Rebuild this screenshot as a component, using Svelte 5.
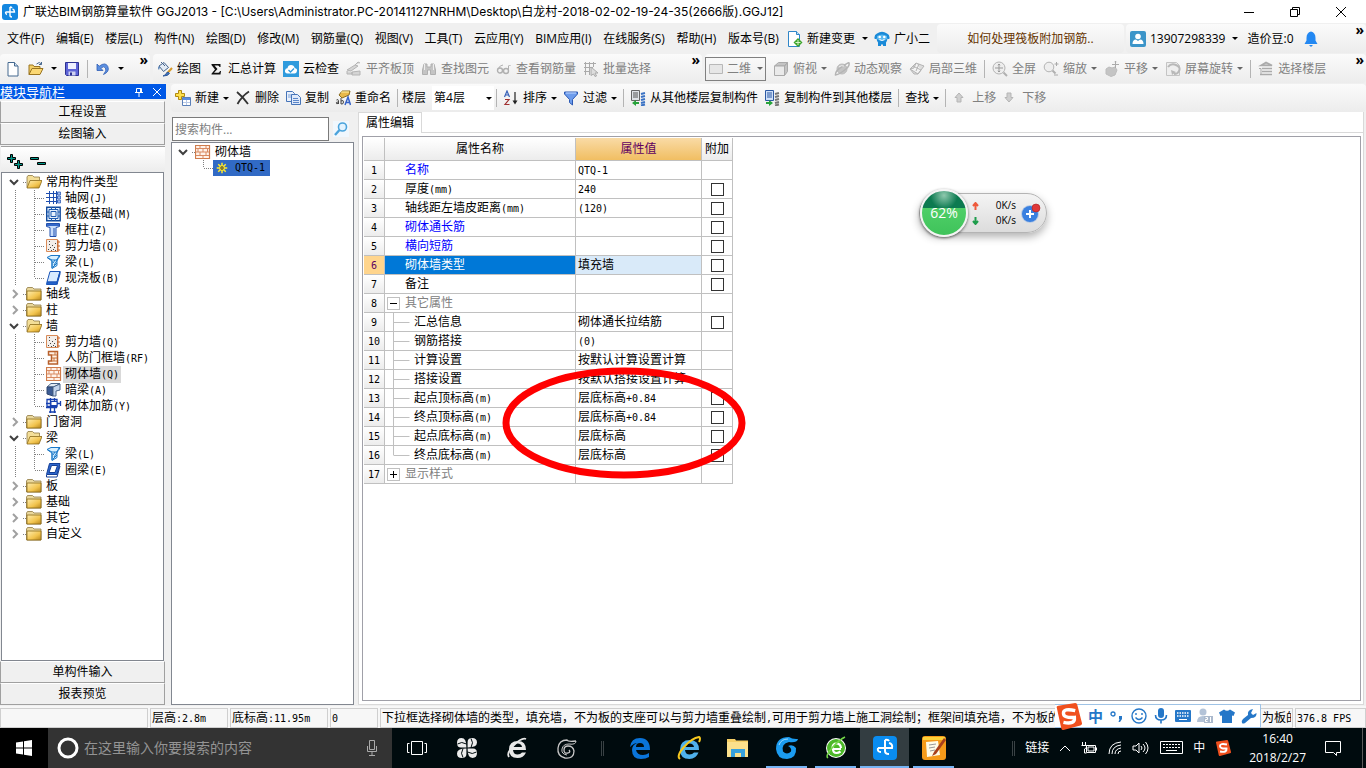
<script>
  const title = '广联达BIM钢筋算量软件 GGJ2013 - [C:\\Users\\Administrator.PC-20141127NRHM\\Desktop\\白龙村-2018-02-02-19-24-35(2666版).GGJ12]';

  const menus = [
    '文件(F)', '编辑(E)', '楼层(L)', '构件(N)', '绘图(D)', '修改(M)', '钢筋量(Q)',
    '视图(V)', '工具(T)', '云应用(Y)', 'BIM应用(I)', '在线服务(S)', '帮助(H)', '版本号(B)'
  ];

  const drawTools = [
    { icon: 'brush', text: '绘图' },
    { icon: 'sigma', text: '汇总计算' },
    { icon: 'cloud', text: '云检查' },
    { icon: 'align', text: '平齐板顶', off: true },
    { icon: 'binoculars', text: '查找图元', off: true },
    { icon: 'glasses', text: '查看钢筋量', off: true },
    { icon: 'batch', text: '批量选择', off: true }
  ];

  const viewTools = [
    { icon: 'cube', text: '俯视', caret: true, off: true },
    { icon: 'orbit', text: '动态观察', off: true },
    { icon: 'local3d', text: '局部三维', off: true },
    { sep: true },
    { icon: 'fit', text: '全屏', off: true },
    { icon: 'zoom', text: '缩放', caret: true, off: true },
    { icon: 'pan', text: '平移', caret: true, off: true },
    { icon: 'rotate', text: '屏幕旋转', caret: true, off: true },
    { sep: true },
    { icon: 'floors', text: '选择楼层', off: true }
  ];

  const editTools = [
    { icon: 'create', text: '新建', caret: true },
    { icon: 'remove', text: '删除' },
    { icon: 'copy', text: '复制' },
    { icon: 'rename', text: '重命名' }
  ];

  const listTools = [
    { icon: 'sort', text: '排序', caret: true },
    { icon: 'filter', text: '过滤', caret: true },
    { sep: true },
    { icon: 'copyFrom', text: '从其他楼层复制构件' },
    { icon: 'copyTo', text: '复制构件到其他楼层' },
    { sep: true },
    { text: '查找', caret: true },
    { sep: true },
    { icon: 'up', text: '上移', off: true },
    { icon: 'down', text: '下移', off: true }
  ];

  let groups = [
    {
      text: '常用构件类型', open: true, items: [
        { icon: 'axis', text: '轴网(J)' },
        { icon: 'raft', text: '筏板基础(M)' },
        { icon: 'column', text: '框柱(Z)' },
        { icon: 'shear', text: '剪力墙(Q)' },
        { icon: 'beam', text: '梁(L)' },
        { icon: 'slab', text: '现浇板(B)' }
      ]
    },
    { text: '轴线', open: false, items: [] },
    { text: '柱', open: false, items: [] },
    {
      text: '墙', open: true, items: [
        { icon: 'shear', text: '剪力墙(Q)' },
        { icon: 'door', text: '人防门框墙(RF)' },
        { icon: 'brick', text: '砌体墙(Q)', current: true },
        { icon: 'hidden', text: '暗梁(A)' },
        { icon: 'rebar', text: '砌体加筋(Y)' }
      ]
    },
    { text: '门窗洞', open: false, items: [] },
    {
      text: '梁', open: true, items: [
        { icon: 'beam', text: '梁(L)' },
        { icon: 'ring', text: '圈梁(E)' }
      ]
    },
    { text: '板', open: false, items: [] },
    { text: '基础', open: false, items: [] },
    { text: '其它', open: false, items: [] },
    { text: '自定义', open: false, items: [] }
  ];

  const rows = [
    { name: '名称', value: 'QTQ-1', blue: true },
    { name: '厚度(mm)', value: '240', check: true },
    { name: '轴线距左墙皮距离(mm)', value: '(120)', check: true },
    { name: '砌体通长筋', value: '', blue: true, check: true },
    { name: '横向短筋', value: '', blue: true, check: true },
    { name: '砌体墙类型', value: '填充墙', check: true, selected: true },
    { name: '备注', value: '', check: true },
    { name: '其它属性', value: '', toggle: '-' },
    { name: '汇总信息', value: '砌体通长拉结筋', child: true, check: true },
    { name: '钢筋搭接', value: '(0)', child: true },
    { name: '计算设置', value: '按默认计算设置计算', child: true },
    { name: '搭接设置', value: '按默认搭接设置计算', child: true },
    { name: '起点顶标高(m)', value: '层底标高+0.84', child: true, check: true },
    { name: '终点顶标高(m)', value: '层底标高+0.84', child: true, check: true },
    { name: '起点底标高(m)', value: '层底标高', child: true, check: true },
    { name: '终点底标高(m)', value: '层底标高', child: true, check: true, last: true },
    { name: '显示样式', value: '', toggle: '+' }
  ];

  const hint = '下拉框选择砌体墙的类型，填充墙，不为板的支座可以与剪力墙重叠绘制,可用于剪力墙上施工洞绘制；框架间填充墙，不为板的';

  // 16x16 图标
  const icons = {
    app: '<rect width="16" height="16" rx="3" fill="#1487e0"/><path d="M8 3v8.500q0 1.500 2 1.500M3.500 8h9q0-2.500-2-3M3.500 8q0 2 1.500 2.500M8 3q1.500 0 2 1" fill="none" stroke="#fff" stroke-width="1.400"/>',
    file: '<path d="M3 1.500h6.500l3.500 3.500v10H3z" fill="#fff" stroke="#44688f"/><path d="M9.500 1.500V5H13" fill="#cfe0f2" stroke="#44688f"/>',
    open: '<path d="M1 13.500V4h4l1 1.500h6V8" fill="#f3cf66" stroke="#9a7420"/><path d="M1 13.500L4 7.500h11l-3 6z" fill="#fbd874" stroke="#9a7420"/><path d="M8.500 3q3-3 5 0m0-2v2.500h-2.500" fill="none" stroke="#47688f"/>',
    save: '<path d="M1.500 1.500h13v13h-12l-1-1z" fill="#5d63d6" stroke="#2c3192"/><path d="M4 2h8v6H4z" fill="#eef0ff"/><path d="M4.500 10.500h7v4h-7z" fill="#cfd2f0"/><path d="M6 11.500h2v3H6z" fill="#2c3192"/>',
    undo: '<path d="M2 3v6.500h6L5.800 7.300Q9 4.500 10.500 7T8.500 13.500Q15 10.500 12.800 5.500T4.200 5.200z" fill="#5a8ee0" stroke="#2f5db5" stroke-width=".8"/>',
    brush: '<path d="M2 5l5-3.500 4.500 5-5 4z" fill="#e3ebf5" stroke="#44638c"/><path d="M2 5Q0 7 2 9l1-3" fill="#5b84b8"/><path d="M4 1l4 4" stroke="#44638c"/><path d="M15 7l-5 5.500" stroke="#d79a2b" stroke-width="2"/><path d="M11 11l1.500 1.500Q11 15 6 15q3-1 3-2.500z" fill="#4272b8" stroke="#2f5a9c"/>',
    sigma: '<path d="M3.500 3h9v3h-1q-.3-1.500-1.500-1.500H6.500L9.500 8l-3.500 3.800h4.500q1 0 1.500-1.800h1l-.5 3.500h-9v-.8L7 8.500 3.500 4z" fill="#111"/>',
    cloud: '<rect width="16" height="16" fill="#2f9bdd"/><path d="M4.500 12.500Q1.500 12 2 9.500T4.500 7.200Q5 4 8 4t3.700 3Q14.500 7.500 14 10t-2.500 2.500z" fill="#fff"/><path d="M5.500 9l2 2 3.500-3.500" fill="none" stroke="#2f9bdd" stroke-width="1.300"/>',
    align: '<path d="M1 9l8-5 3 1-7 5zM1 10v3h5v-2M6 11l8-1v4H6zM9 4l3-3 2 1" fill="#d5d5d5" stroke="#b4b4b4"/>',
    binoculars: '<path d="M3 3h3v3h4V3h3l1.500 6v4.500h-5V9h-3v4.500h-5V9z" fill="#c4c4c4" stroke="#b0b0b0"/><path d="M3.500 3v6M12.500 3v6" stroke="#eee"/>',
    glasses: '<circle cx="4" cy="9.500" r="2.500" fill="none" stroke="#b0b0b0" stroke-width="1.400"/><circle cx="10" cy="10" r="2.500" fill="none" stroke="#b0b0b0" stroke-width="1.400"/><path d="M2 8q2-4 5-4M12.500 10V5q1-2 2 0" fill="none" stroke="#b0b0b0"/>',
    batch: '<path d="M1 2.500h12M1 6.500h9M1 10.500h6M2.500 1v13M6.500 1v13M10.500 1v5" stroke="#aaa" fill="none"/><path d="M8 6l7 6h-3l1.500 3-1.500.5L10.500 13 8 14.500z" fill="#ddd" stroke="#aaa"/>',
    plane: '<path d="M1.500 3.500h13v9h-13z" fill="#e6e6e6" stroke="#b8b8b8"/>',
    cube: '<path d="M1.500 5l4-3.500h9l-3 3.500zM11.500 5l3-3.500v9l-3 4z" fill="#c4c4c4" stroke="#aaa"/><path d="M1.500 5h10v9.500h-10z" fill="#eaeaea" stroke="#aaa"/>',
    orbit: '<circle cx="8" cy="8" r="5" fill="#c4c4c4" stroke="#bcbcbc"/><path d="M1.500 14Q1 10 8 5.500T15 2q1 3-5 7.500T1.500 14z" fill="none" stroke="#b4b4b4" stroke-width="1.500"/><path d="M5 6q2-2 5-1" stroke="#f2f2f2" fill="none"/>',
    local3d: '<path d="M1 8l6-6 8 3-6 8zM4 5l8 4M7 2L5 7l-4 1 4 5 4 0 3-4M10 3L7 10" fill="#ddd" stroke="#b4b4b4"/>',
    fit: '<circle cx="7" cy="7" r="6" fill="#eee" stroke="#b4b4b4"/><path d="M7 3v8M3 7h8M5.800 4.200L7 3l1.200 1.200M5.800 9.800L7 11l1.200-1.200" stroke="#999" fill="none"/><path d="M11.500 11.500l3.500 3.500" stroke="#b0b0b0" stroke-width="2"/>',
    zoom: '<circle cx="6" cy="6" r="4.800" fill="#eee" stroke="#b4b4b4"/><path d="M9.500 9.500l3 3" stroke="#b0b0b0" stroke-width="2"/><path d="M13.500 1v4M11.500 3h4M11 14h4" stroke="#aaa"/>',
    pan: '<path d="M2 8l3-2 3 1 3-1 2 3-2 5-4 1.500L2 13z" fill="#c4c4c4" stroke="#bcbcbc"/><path d="M11.500 0v7M8 3.500h7M10.500 1.200l1-1 1 1" stroke="#aaa" fill="none"/>',
    rotate: '<path d="M1.500 1.500h10l3 3v10h-13z" fill="#eee" stroke="#c4c4c4"/><path d="M3 6q3-4 8-2t3 6q-1 3-5 3" fill="none" stroke="#b8b8b8" stroke-width="2"/><path d="M6 9l1 5 4-3z" fill="#b8b8b8"/>',
    floors: '<path d="M3 4.500L8 1.500l6 3zM4 7.500h10M4 10.500h10M2 13.500h12" stroke="#aaa" stroke-width="1.600" fill="#ccc"/><path d="M1 7.500h2v6" stroke="#aaa" fill="none"/>',
    create: '<path d="M3.500.5h3v3h3v3h-3v3h-3v-3h-3v-3h3z" fill="#ffe04a" stroke="#b08a10"/><path d="M7.500 7.500h8v8h-8z" fill="#fff" stroke="#5a7fb8"/><path d="M8 8h7v2H8z" fill="#5b8de0"/><path d="M8 12.500h7M11.500 10v5" stroke="#b8c9e6"/>',
    remove: '<path d="M2 2q6 5 11 12M14 1.500Q7 6 2.500 14" stroke="#333" stroke-width="1.800" fill="none"/>',
    copy: '<path d="M1.500 1.500h6l2 2v8h-8z" fill="#e9f0fb" stroke="#4674b8"/><path d="M3 5h4M3 7h4" stroke="#7fa2d8"/><path d="M6.500 4.500h6l3 3v7h-9z" fill="#dfe9fa" stroke="#4674b8"/><path d="M8 8.500h5M8 10.500h6M8 12.500h6" stroke="#5b86c8"/>',
    rename: '<path d="M4 5l3-4h8l-1 4-7 3z" fill="#e8b84a" stroke="#8a6c20"/><path d="M6 2h8" stroke="#fff2a8"/><path d="M10 15l3-8 2.500 8M10.500 12.500h4" stroke="#3562c8" stroke-width="1.500" fill="none"/><path d="M1.500 10q2-1 2 .5V14M3.500 12Q1 12 1 13t2.500.5M6 8v6M6 11q2.500-1.500 2.500 1T6 14" stroke="#444" fill="none"/>',
    sort: '<path d="M1.500 7L4 1l2.500 6M2.500 5h3" stroke="#3660b8" fill="none" stroke-width="1.200"/><path d="M2 9.500h4L2 14.500h4.500" stroke="#a03030" fill="none" stroke-width="1.200"/><path d="M12 2v11" stroke="#222" stroke-width="1.200"/><path d="M9.500 10.500h5L12 14.500z" fill="#222"/>',
    filter: '<path d="M1.500 2h13v2L9.500 9.500V15l-3-2.500v-3L1.500 4z" fill="#6d9cec" stroke="#2c59b3"/><path d="M3 3h10" stroke="#c2d8ff"/>',
    copyFrom: '<path d="M1.500.5h8v10h-8z" fill="#dfe2e6" stroke="#666"/><path d="M3 3h5M3 5h5M3 7h5" stroke="#555"/><path d="M2 13l4-3v2h3v2H6v2z" fill="#27a23a"/><path d="M11 4l4-1M11 7l4-1M11 10l4-1M11 13l4-1M11 15.500l4-1" stroke="#3a72c4" stroke-width="2"/>',
    copyTo: '<path d="M1.500.5h8v10h-8z" fill="#cfe0f8" stroke="#2c59a3"/><path d="M3 3h5M3 5h5M3 7h5" stroke="#2c59a3"/><path d="M9 13l-4-3v2H2v2h3v2z" fill="#27a23a"/><path d="M11 4l4-1M11 7l4-1M11 10l4-1M11 13l4-1M11 15.500l4-1" stroke="#777" stroke-width="2"/>',
    up: '<path d="M7 3l4 4.500H9V12H5V7.500H3z" fill="#cfcfcf" stroke="#b5b5b5"/>',
    down: '<path d="M7 12L3 7.500h2V3h4v4.500h2z" fill="#cfcfcf" stroke="#b5b5b5"/>',
    change: '<path d="M1.500.5h8l3 3v12h-11z" fill="#fff" stroke="#2f86c8"/><path d="M9.500.5v3h3" fill="#bfe0f7" stroke="#2f86c8"/><path d="M11 7l4.500 4.500L11 16l-4.500-4.500z" fill="#3da52c"/><path d="M11 9v5M8.500 11.500h5" stroke="#d8f5c8"/>',
    robot: '<path d="M3 2.500q5-3.500 10 0 3 1 2.500 5-1 1-2 0-.5 3-1.500 4v3.500h-3v-1.500H7V15H4v-3.500Q3 10.500 2.500 7.500q-1 1-2 0Q0 3.500 3 2.500z" fill="#1a8ad8"/><path d="M3 5q5-3 10 0v3q-5 4-10 0z" fill="#5bb9f0"/><circle cx="5.700" cy="6" r="1.300" fill="#fff"/><circle cx="10.300" cy="6" r="1.300" fill="#fff"/><path d="M5.500 8.500q2.500 2 5 0" stroke="#fff" fill="none"/>',
    user: '<rect width="16" height="16" rx="2" fill="#3c95c9"/><circle cx="8" cy="5.500" r="2.800" fill="#fff"/><path d="M2.500 13q0-4.500 3.500-4.500l2 1.500 2-1.500q3.500 0 3.500 4.500z" fill="#fff"/>',
    bell: '<path d="M8 .5Q3.500 1.500 3.500 7v2.500L1.500 13h13l-2-3.500V7Q12.500 1.500 8 .5zM6 14h4l-2 2z" fill="#2388f2"/>',
    folder: '<path d="M.5 14V3l1-1.500h5L8 3h7v11z" fill="#e9d79c" stroke="#8f7a42" stroke-width=".8"/><path d="M1 5h14v9H1z" fill="url(#gold)" stroke="#8a6a18" stroke-width=".8"/>',
    folderOpen: '<path d="M1 13.500V3l1-1.500h4.500L8 3h5.500v3" fill="#f3de98" stroke="#8f7a42" stroke-width=".8"/><path d="M1 14L4 6.500h12L13 14z" fill="url(#gold)" stroke="#8a6a18" stroke-width=".8"/>',
    axis: '<path d="M0 3.500h12M0 7.500h12M0 11.500h12M3.500 1v13M7.500 1v13M10.500 1v13" stroke="#2050b0"/><path d="M11.500 2h3v3h-3zM11.500 6h3v3h-3zM11.500 10h3v3h-3z" fill="#9db9ee" stroke="#2050b0" stroke-width=".7"/>',
    raft: '<path d="M.7 1.200h13.500v13.500H.7z" fill="#e6f1fc" stroke="#124a9c" stroke-width="1.400"/><path d="M5 5.500h5v5H5zM3 3.500h9v9H3zM5.500 1v3M9.500 1v3M5.500 12v3M9.500 12v3M1 6h2M1 10h2M12 6h2M12 10h2" fill="none" stroke="#1d5aae"/>',
    column: '<path d="M.5 1.500h13v3L10 5.500v9H4v-9L.5 4.500z" fill="#c9ddfa" stroke="#1f4fae"/><path d="M1 2h12v2H1z" fill="#3468c8"/><path d="M8 6v8" stroke="#1f4fae"/>',
    shear: '<path d="M.5 1.500h11v12H.5z" fill="#f3eeea" stroke="#d98b58"/><path d="M2 11h1v1H2zM4 9h1v1H4zM3 6h1v1H3zM7 11h1v1H7zM6 7h1v1H6zM9 5h1v1H9zM9 12h1v1H9zM5 12h1v1H5zM8 9h1v1H8zM3 3h1v1H3z" fill="#444"/><path d="M12 2v12M11 4h3M11 8h3M11 12h3" stroke="#c8662c"/>',
    beam: '<path d="M1 3.500l4-2h9l-1 2-2 2v6l-5 3V7z" fill="#d8f0ff" stroke="#1a78c8"/><path d="M2 4l4 2h5l2-4M6 7v7M9 6l-2 3M12 5L8 11M11 9l-4 4" stroke="#1a78c8" fill="none"/>',
    slab: '<path d="M4 1.500h10L11 12H1z" fill="#d8ebff" stroke="#1b55b8"/><path d="M1 12h10l-.5 2.500h-10zM14 1.500L11 12v2.500L14 4z" fill="#2362cc" stroke="#1b55b8"/>',
    door: '<path d="M2.500 1.500h9v12.500h-9v-3h3V5h-3z" fill="#fff1e4" stroke="#b8602c" stroke-width="1.500"/><path d="M6 5h5M6 8h5M6 11h5M9 2v3M8 8v3" stroke="#c8743c"/>',
    brick: '<path d="M.5 1.500h14v13H.5z" fill="#fff3ea" stroke="#cf7c4c" stroke-width="1.200"/><path d="M1 4.500h13M1 8h13M1 11.500h13M5 2v2.500M11 2v2.500M8 5v3M3 5v3M12.500 5v3M5 8v3.500M11 8v3.500M8 11.500v3" stroke="#d98b62"/>',
    hidden: '<path d="M1 5l4-3.500h9L8 5z" fill="#e2eaf4" stroke="#4a6488"/><path d="M1 5h6v9l-6-2z" fill="#3c5c94" stroke="#2e4670"/><path d="M7 5l7-3v6l-4 1v5H7z" fill="#c3d4ec" stroke="#4a6488"/>',
    rebar: '<path d="M1 1.500h10v7H1zM0 5.500h15M0 9.500h11M4.500 0v15M8.500 0v15M14.500 3v5M3 14h7" stroke="#1740b0" stroke-width="1.300" fill="none"/><path d="M5 3.500h6v4H5z" fill="#fff" stroke="#1740b0"/>',
    ring: '<path d="M3.500 1.500h10.500L11 12.500H.5z" fill="#2d66cc" stroke="#153f96"/><path d="M5.500 3.500h6l-2.500 7h-6z" fill="#fff" stroke="#153f96"/><path d="M.5 13v2h10.500l3-11" fill="none" stroke="#153f96"/>',
    gear: '<path d="M8 1v14M1 8h14M3 3l10 10M13 3L3 13" stroke="#ffe92a" stroke-width="2"/><circle cx="8" cy="8" r="3.600" fill="#ffe92a"/><circle cx="8" cy="8" r="2.200" fill="#333"/><circle cx="8" cy="8" r="1" fill="#ffe92a"/>',
    search: '<path d="M0 0h16v16H0z" fill="#f0f7fd"/><circle cx="9.500" cy="6" r="4" fill="#e2f3ff" stroke="#4aa3dc" stroke-width="1.600"/><path d="M6.500 9L2 14" stroke="#4aa3dc" stroke-width="2.400"/>',
    smile: '<circle cx="8" cy="8" r="7" fill="none" stroke="#2577c8" stroke-width="1.400"/><path d="M5 5v2M11 5v2M4.500 9.500q3.500 4 7 0" fill="none" stroke="#2577c8" stroke-width="1.400"/>',
    mic: '<rect x="5" y="0" width="6" height="10" rx="3" fill="#2577c8"/><path d="M2.500 7q0 5 5.500 5t5.500-5M8 12v3.500" stroke="#2577c8" stroke-width="1.600" fill="none"/>',
    keys: '<rect x="0" y="2" width="16" height="12" rx="1" fill="#2577c8"/><path d="M2 5h12M2 8h12" stroke="#fff" stroke-width="1.500" stroke-dasharray="1.500 1"/><path d="M4 11.500h8" stroke="#fff"/>',
    person: '<circle cx="6" cy="4" r="3.500" fill="#b3c3d8"/><path d="M0 14q0-6 6-6t5 6z" fill="#b3c3d8"/><path d="M7 8h9v7H7z" fill="#aab9cd"/><path d="M8.500 9.500h2v2h-2v2h2M13.500 9v5" stroke="#fff" fill="none"/>',
    shirt: '<path d="M5 1.500q3 2.500 6 0l5 3-1.500 3.500L13 7.500V15H3V7.500L1.500 8 0 4.500z" fill="#2577c8"/>',
    wrench: '<path d="M1 15Q0 13 2 11l5-4Q6 2 12 1L10 5l2 2 3.500-2Q16 10 10 10l-6 5q-2 1-3 0z" fill="#2577c8"/>',
    sogou: '<path d="M1 2.500Q.8 1.800 2 1.600L12 0q1 0 1.200 1L16 12q.2 1-1 1.300L5 16q-1 .2-1.300-1z" fill="#f0501e"/><path d="M12 4.500Q5 3 5 6t6.500 2.500Q12 13 5 11.500" stroke="#fff" stroke-width="2" fill="none"/>'
  };

  // 32x32 任务栏图标
  const taskIcons = {
    view: '<path d="M10.500 9.500h11v13h-11z" fill="none" stroke="#fff"/><path d="M8.500 11.500H6.500v9h2M23.500 11.500h2v9h-2" fill="none" stroke="#fff"/>',
    pinwheel: '<path d="M15.400 15.400H10q-4 0-4-4.500Q6 6 10.500 6q5 0 4.900 9.400zM16.600 15.400V10q0-4 4.500-4Q26 6 26 10.500q0 5-9.400 4.900zM16.600 16.600H22q4 0 4 4.500 0 4.900-4.500 4.900-5 0-4.900-9.400zM15.400 16.600V22q0 4-4.500 4Q6 26 6 21.500q0-5 9.400-4.900z" fill="#ececec"/><path d="M6.500 12q4-3 9 0M20 6.500q3 4 0 9M25.500 20q-4 3-9 0M12 25.500q-3-4 0-9" stroke="#000b0e" fill="none"/>',
    ieGray: '<path d="M25 18H12q.5 4.500 4.500 4.500 3 0 4.500-2h4Q22.500 26 16.500 26 8 26 8 17.500T17 9q8 0 8 9zM12 15h9q-.5-3.500-4.500-3.500T12 15z" fill="#e8e8e8"/><path d="M8 25q-3-4 5-12T25 7" fill="none" stroke="#e8e8e8" stroke-width="1.800"/>',
    swirlGray: '<path d="M25 9q-8 1-9-1-8 0-9 8t7 10q9 1 9-7-1-5-6-5-4 0-4 4t4 3q3-1 1-3" fill="none" stroke="#c8c8c8" stroke-width="1.300"/><path d="M25 9q0 4-7 3-6 0-7 5t5 6" fill="none" stroke="#c8c8c8"/>',
    edge: '<path d="M6 15Q7 6 16 6q10 0 10 12H12q1 5 7 5 3 0 6-2v4q-3 2-8 2-9 0-9-9 0-5 5-7-3 0-7 4zM12 15h8q0-4-4-4t-4 4z" fill="#0a74da"/>',
    ie: '<path d="M26 18H12q.5 4.500 4.500 4.500 3 0 4.500-2h4.500Q23 27 16.500 27 7 27 7 17.500T17 8q9 0 9 10zM12 15h9q-.5-3.500-4.500-3.500T12 15z" fill="#4fb0ec"/><path d="M7 27q-4-3 4-12T26 5q2 1 0 5" fill="none" stroke="#f6c81e" stroke-width="2"/>',
    explorer: '<path d="M5 7h8l1 1.500h12V25H5z" fill="#f6cf66"/><path d="M5 10h21v15H5z" fill="#fbe08c"/><path d="M9 25v-8h14v8h-4v-4h-6v4z" fill="#36a0dc"/>',
    glodon: '<path d="M27 7q-6 .5-9-2Q5 5 5 17q1 10 11 10 10-1 9-11-3-4-8-2 4 2 3 5.500-4 4-8 0-2-8 6-9.500 8 1 9-3z" fill="#1b9cf0"/><path d="M8 13q2-6 9-6" stroke="#9edcff" fill="none"/>',
    green: '<circle cx="16" cy="16" r="10" fill="#fff"/><circle cx="16" cy="16" r="9" fill="#4cb82a"/><path d="M21 17h-8q0 4 3.500 4 2 0 4-1.500M12.500 16q0-4.500 4-4.500T21 16" fill="none" stroke="#fff" stroke-width="2.200"/><path d="M8 26q-3-2 4-10T25 5" stroke="#73d648" stroke-width="1.500" fill="none"/>',
    ggj: '<rect x="4" y="4" width="24" height="24" rx="4" fill="#0a8cf0"/><path d="M16 8v11q0 3 4 3M9 16h14q1-4-3-5M9 16q-1 4 3 4M16 8q3-1 4 1" fill="none" stroke="#fff" stroke-width="2"/>',
    note: '<rect x="4" y="4" width="24" height="24" rx="3" fill="#f59a1a"/><path d="M5 5h22v3H5z" fill="#fbd23a"/><path d="M8 10l12-1 2 14-13 2z" fill="#fffbe8"/><path d="M11 13l7-1M11 16l6-1M12 19l5-1" stroke="#999"/><path d="M26 6L16 20l-2 4 4-2L28 8z" fill="#a8401c"/>'
  };

  const pinned = ['view', 'pinwheel', 'ieGray', 'swirlGray'];
  const running = [
    { icon: 'edge' }, { icon: 'ie' }, { icon: 'explorer' },
    { icon: 'glodon', run: true }, { icon: 'green', run: true },
    { icon: 'ggj', run: true, active: true }, { icon: 'note', run: true }
  ];

  // 西文半角字符单独成段，宽度为汉字的一半
  const runs = (text) => text.split(/([\x20-\x7e]+)/).filter(Boolean);
  const isLatin = (part) => /^[\x20-\x7e]/.test(part);

  function toggleGroup(group) {
    group.open = !group.open;
    groups = groups;
  }
</script>

{#snippet icon(name)}
  <svg class="icon" viewBox="0 0 16 16" aria-hidden="true">{@html icons[name]}</svg>
{/snippet}

{#snippet song(text)}
  {#each runs(text) as part}<span class:latin={isLatin(part)}>{part}</span>{/each}
{/snippet}

{#snippet tool(item)}
  {#if item.sep}
    <span class="sep"></span>
  {:else}
    <button class="tool" class:off={item.off}>
      {#if item.icon}{@render icon(item.icon)}{/if}
      <span>{item.text}</span>
      {#if item.caret}<i class="caret"></i>{/if}
    </button>
  {/if}
{/snippet}

<svg class="defs" width="0" height="0" aria-hidden="true">
  <defs>
    <linearGradient id="gold" x1="0" y1="0" x2="1" y2="1">
      <stop offset="0" stop-color="#ffeeb0" />
      <stop offset=".6" stop-color="#f2c44e" />
      <stop offset="1" stop-color="#b8861c" />
    </linearGradient>
  </defs>
</svg>

<div class="app">
  <header class="titlebar">
    {@render icon('app')}
    <h1>{title}</h1>
    <div class="window-buttons">
      <button aria-label="最小化"><svg width="12" height="12"><path d="M1 6.500h10" /></svg></button>
      <button aria-label="还原"><svg width="12" height="12"><path d="M1.500 3.500h7v7h-7zM3.500 3.500v-2h7v7h-2" /></svg></button>
      <button aria-label="关闭"><svg width="12" height="12"><path d="M1 1l10 10M11 1L1 11" /></svg></button>
    </div>
  </header>

  <nav class="menubar">
    <div class="menus">
      {#each menus as menu}
        <button class="menu">{menu}</button>
      {/each}
    </div>
    <button class="tool change">{@render icon('change')}<span>新建变更</span><i class="caret wide"></i></button>
    <button class="tool robot">{@render icon('robot')}<span>广小二</span></button>
    <div class="strip tip"><a href="#tip">如何处理筏板附加钢筋..</a></div>
    <div class="strip account">
      <button class="tool">{@render icon('user')}<span>13907298339</span><i class="caret wide"></i></button>
      <button class="tool">造价豆:0</button>
      {@render icon('bell')}
      <button class="more">»</button>
    </div>
  </nav>

  <div class="toolbar">
    <div class="strip files">
      <button class="tool" aria-label="新建工程">{@render icon('file')}</button>
      <button class="tool" aria-label="打开">{@render icon('open')}<i class="caret wide"></i></button>
      <button class="tool" aria-label="保存">{@render icon('save')}</button>
      <span class="sep"></span>
      <button class="tool" aria-label="撤销">{@render icon('undo')}<i class="caret wide"></i></button>
      <button class="more">»</button>
    </div>
    <div class="strip draw">
      {#each drawTools as item}{@render tool(item)}{/each}
      <button class="more">»</button>
    </div>
    <div class="strip view">
      <button class="tool off boxed">{@render icon('plane')}<span>二维</span><i class="caret wide"></i></button>
      {#each viewTools as item}{@render tool(item)}{/each}
      <button class="more">»</button>
    </div>
  </div>

  <div class="workspace">
    <aside class="navigator">
      <div class="nav-title">
        <span>模块导航栏</span>
        <button aria-label="固定"><svg width="10" height="10"><path d="M2.500 5.500v-4h5v4M6.500 1.500v4M1 5.500h8M5 6v4" /></svg></button>
        <button aria-label="关闭导航栏"><svg width="10" height="10"><path d="M1 1l8 8M9 1L1 9" /></svg></button>
      </div>
      <button class="section">工程设置</button>
      <button class="section">绘图输入</button>
      <div class="nav-tools">
        <button aria-label="全部展开">
          <svg width="18" height="16"><path d="M4.500.5h2v3h3v2h-3v3h-2v-3h-3v-2h3zM11.500 6.500h2v3h3v2h-3v3h-2v-3h-3v-2h3z" /></svg>
        </button>
        <button aria-label="全部折叠">
          <svg width="18" height="16"><path d="M1.500 3.500h8v2h-8zM8.500 8.500h8v2h-8z" /></svg>
        </button>
      </div>
      <ul class="tree">
        {#each groups as group}
          <li>
            <button class="node" on:click={() => toggleGroup(group)}>
              <svg class="twist" class:open={group.open} width="20" height="16" aria-hidden="true">
                <path d={group.open ? 'M2 6l4 4 4-4' : 'M5 4l4 4-4 4'} />
                <path class="dots" d="M15 8.500h5" />
              </svg>
              {@render icon(group.open ? 'folderOpen' : 'folder')}
              <span class="label">{@render song(group.text)}</span>
            </button>
            {#if group.open}
              <ul>
                {#each group.items as item, i}
                  <li>
                    <button class="node child">
                      <svg width="38" height="16" aria-hidden="true">
                        <path class="dots" d="M7.500 0v16M26.500 0v{i === group.items.length - 1 ? 8 : 16}M27 8.500h10" />
                      </svg>
                      {@render icon(item.icon)}
                      <span class="label" class:current={item.current}>{@render song(item.text)}</span>
                    </button>
                  </li>
                {/each}
              </ul>
            {/if}
          </li>
        {/each}
      </ul>
      <button class="section">单构件输入</button>
      <button class="section">报表预览</button>
    </aside>

    <div class="main">
      <div class="strip edit">
        {#each editTools as item}{@render tool(item)}{/each}
        <span class="sep"></span>
        <label for="floor">楼层</label>
        <div class="floor">
          <select id="floor">
            <option>第4层</option>
          </select>
          <i class="caret"></i>
        </div>
        <span class="sep"></span>
        {#each listTools as item}{@render tool(item)}{/each}
      </div>

      <div class="panes">
        <section class="components">
          <div class="search">
            <input type="text" placeholder="搜索构件..." aria-label="搜索构件" />
            <button aria-label="搜索">{@render icon('search')}</button>
          </div>
          <ul class="tree list">
            <li>
              <button class="node">
                <svg class="twist open" width="20" height="16" aria-hidden="true">
                  <path d="M2 6l4 4 4-4" />
                  <path class="dots" d="M15 8.500h5" />
                </svg>
                {@render icon('brick')}
                <span class="label">砌体墙</span>
              </button>
              <ul>
                <li>
                  <button class="node">
                    <svg width="36" height="16" aria-hidden="true"><path class="dots" d="M26.500 0v8M27 8.500h9" /></svg>
                    <span class="picked">{@render icon('gear')}{@render song('QTQ-1')}</span>
                  </button>
                </li>
              </ul>
            </li>
          </ul>
        </section>

        <section class="properties">
          <div class="tabs">
            <button class="tab">属性编辑</button>
          </div>
          <div class="sheet">
            <table>
              <colgroup>
                <col class="c-index" /><col class="c-name" /><col class="c-value" /><col class="c-extra" />
              </colgroup>
              <thead>
                <tr>
                  <th></th>
                  <th>属性名称</th>
                  <th class="hot">属性值</th>
                  <th>附加</th>
                </tr>
              </thead>
              <tbody>
                {#each rows as row, i}
                  <tr class:selected={row.selected}>
                    <th scope="row">{@render song(String(i + 1))}</th>
                    <td class="name" class:blue={row.blue} class:gray={row.toggle}>
                      <div class="cell">
                        {#if row.toggle}
                          <button class="toggle" aria-label="展开或折叠">
                            <svg width="11" height="11"><path d={row.toggle === '-' ? 'M2 5.500h7' : 'M2 5.500h7M5.500 2v7'} /></svg>
                          </button>
                        {:else if row.child}
                          <svg class="branch" width="26" height="18"><path d="M5.500 0v{row.last ? 9 : 18}M5.500 9.500h16" /></svg>
                        {:else}
                          <span class="indent"></span>
                        {/if}
                        <span>{@render song(row.name)}</span>
                      </div>
                    </td>
                    <td class="value">{@render song(row.value)}</td>
                    <td class="extra">
                      {#if row.check}<input type="checkbox" aria-label={row.name} />{/if}
                    </td>
                  </tr>
                {/each}
              </tbody>
            </table>

            <svg class="marker" width="250" height="120" viewBox="0 0 250 120" aria-hidden="true">
              <ellipse cx="125" cy="60" rx="118" ry="52" />
            </svg>

            <div class="speed">
              <div class="ball"><span>62%</span></div>
              <div class="rates">
                <span><svg width="7" height="8"><path d="M3.500 8V2M1 4l2.500-3L6 4" stroke="#ee5a3c" /></svg>0K/s</span>
                <span><svg width="7" height="8"><path d="M3.500 0v6M1 4l2.500 3L6 4" stroke="#1f9d4c" /></svg>0K/s</span>
              </div>
              <svg class="boost" width="22" height="22">
                <circle cx="10" cy="12" r="9" fill="#b9cbe4" />
                <circle cx="10" cy="12" r="8" fill="#3a80e0" />
                <path d="M10 8v8M6 12h8" stroke="#fff" stroke-width="2" />
                <circle cx="16" cy="6" r="4" fill="#e03838" stroke="#a82020" stroke-width=".6" />
              </svg>
            </div>
          </div>
        </section>
      </div>
    </div>
  </div>

  <footer class="status">
    <span class="s-blank"></span>
    <span class="s-height">{@render song('层高:2.8m')}</span>
    <span class="s-bottom">{@render song('底标高:11.95m')}</span>
    <span class="s-zero">{@render song('0')}</span>
    <span class="s-hint"><span>{@render song(hint)}</span><span class="tail">为板的</span></span>
    <span class="s-fps">{@render song('376.8 FPS')}</span>
    <div class="ime">
      <svg class="ime-logo" viewBox="0 0 16 16">{@html icons.sogou}</svg>
      <b>中</b>
      <svg class="icon" viewBox="0 0 16 16">
        <circle cx="4" cy="6" r="2" fill="none" stroke="#2577c8" stroke-width="1.300" />
        <path d="M10 8h3v3l-2 3h-1.500l1-3H10z" fill="#2577c8" />
      </svg>
      {@render icon('smile')}
      {@render icon('mic')}
      {@render icon('keys')}
      {@render icon('person')}
      {@render icon('shirt')}
      {@render icon('wrench')}
    </div>
  </footer>

  <div class="taskbar">
    <button class="start" aria-label="开始">
      <svg width="16" height="16"><path d="M0 2.500l7-1v6H0zM8 1.300L16 0v7.500H8zM0 8.500h7v6l-7-1zM8 8.500h8V16l-8-1.300z" fill="#fff" /></svg>
    </button>
    <div class="cortana">
      <svg width="22" height="22"><circle cx="11" cy="11" r="9" fill="none" stroke="#fff" stroke-width="3" /></svg>
      <input type="text" placeholder="在这里输入你要搜索的内容" aria-label="搜索 Windows" />
      <svg width="12" height="18"><path d="M3.500 1.500h5v9h-5zM1.500 7v5.500h9V7M6 12.500V16M3 16.500h6" fill="none" stroke="#aaa" /></svg>
    </div>
    {#each pinned as name}
      <button class="task pinned" aria-label={name}><svg viewBox="0 0 32 32">{@html taskIcons[name]}</svg></button>
    {/each}
    <span class="grip"></span>
    {#each running as task}
      <button class="task" class:run={task.run} class:active={task.active} aria-label={task.icon}>
        <svg viewBox="0 0 32 32">{@html taskIcons[task.icon]}</svg>
      </button>
    {/each}
    <div class="tray">
      <span class="grip"></span>
      <span>链接</span>
      <svg width="12" height="8"><path d="M1 7l5-5 5 5" /></svg>
      <svg width="17" height="14"><path d="M5.500 4.500h9v7h-9zM15.500 6.500v3M1.500 1v3M4.500 1v3M.5 4.500h5v2l-2 1.500v4h2" /><path d="M7 6h6v4H7z" fill="#fff" stroke="none" /></svg>
      <svg width="14" height="14"><path d="M1 13Q1 2 13 1M4 13q0-8 9-9M7 13q0-5 6-6M10 13q0-3 3-3" /></svg>
      <svg width="18" height="14"><path d="M1 5h3l3-3v10L4 9H1zM9 5q2 2 0 4M11 3q4 4 0 8M13.500 1q5 6 0 12" /></svg>
      <svg width="23" height="14"><path d="M.5.5h22v12H.5z" /><path d="M3 3.500h17M3 6.500h17" stroke-dasharray="2 1" /><path d="M6 9.500h11" /></svg>
      <span>中</span>
      {@render icon('sogou')}
      <div class="clock"><span>16:40</span><span>2018/2/27</span></div>
      <svg class="notice" width="18" height="17"><path d="M1.500 1.500h15v11h-4v3l-3-3h-8z" /></svg>
      <span class="edge"></span>
    </div>
  </div>
</div>

<style>
  :global(body) {
    margin: 0;
  }

  .app {
    display: flex;
    flex-direction: column;
    min-height: 100vh;
    background: #f0f0f0;
    color: #000;
    font: 12px/16px "Open Sans", "Noto Sans CJK SC", sans-serif;
    white-space: nowrap;
    overflow: hidden;
  }

  .defs {
    position: absolute;
  }

  button,
  input,
  select {
    margin: 0;
    padding: 0;
    border: 0;
    background: none;
    color: inherit;
    font: inherit;
  }

  ul {
    margin: 0;
    padding: 0;
    list-style: none;
  }

  svg {
    display: block;
    flex: none;
  }

  .icon {
    width: 16px;
    height: 16px;
  }

  .latin {
    font: 10px/16px "DejaVu Sans Mono", monospace;
  }

  /* 标题栏 */
  .titlebar {
    display: flex;
    align-items: center;
    gap: 5px;
    height: 23px;
    padding: 0 2px;
    background: #fff;
  }

  .titlebar h1 {
    flex: 1;
    margin: 0;
    font-family: Inter, "Noto Sans CJK SC", sans-serif;
    font-size: 12px;
    font-weight: 400;
  }

  .window-buttons {
    display: flex;
  }

  .window-buttons button {
    display: flex;
    justify-content: center;
    width: 46px;
  }

  .window-buttons path {
    fill: none;
    stroke: #000;
  }

  /* 菜单和工具栏 */
  .menubar {
    display: flex;
    align-items: stretch;
    height: 30px;
    padding: 1px 0 0 7px;
    box-sizing: border-box;
  }

  .menus {
    display: flex;
    justify-content: space-between;
    width: 772px;
  }

  .strip {
    display: flex;
    align-items: center;
    gap: 7px;
    border-radius: 4px;
    background: linear-gradient(#fbfbfb, #ececec);
  }

  .tool {
    display: flex;
    align-items: center;
    gap: 4px;
  }

  .off {
    color: #808080;
  }

  .caret {
    border: 3px solid transparent;
    border-top-color: #000;
    border-bottom: 0;
  }

  .off .caret {
    border-top-color: #666;
  }

  .caret.wide {
    margin-left: 3px;
  }

  .sep {
    width: 1px;
    height: 18px;
    background: #b4b4b4;
  }

  .more {
    align-self: flex-start;
    margin-left: auto;
    font-size: 14px;
    font-weight: 700;
    line-height: 12px;
  }

  .change {
    padding: 0 6px 0 8px;
  }

  .tip {
    flex: 1;
    justify-content: center;
    margin: 0 2px 0 7px;
  }

  .tip a {
    color: #663300;
    text-decoration: none;
  }

  .account {
    gap: 9px;
    width: 240px;
    padding: 0 2px 0 4px;
    box-sizing: border-box;
  }

  .toolbar {
    display: flex;
    gap: 3px;
    height: 29px;
    margin: 1px 0;
  }

  .files {
    width: 143px;
    padding: 0 2px 0 5px;
  }

  .draw {
    width: 543px;
    padding: 0 2px 0 4px;
  }

  .view {
    flex: 1;
    padding-right: 2px;
  }

  .boxed {
    height: 24px;
    padding: 0 2px;
    border: 1px solid #808080;
    gap: 3px;
    box-sizing: border-box;
  }

  /* 模块导航栏 */
  .workspace {
    display: flex;
    flex: 1;
    gap: 5px;
  }

  .navigator {
    display: flex;
    flex-direction: column;
    width: 166px;
    padding-bottom: 1px;
  }

  .nav-title {
    display: flex;
    align-items: center;
    gap: 8px;
    height: 15px;
    margin-bottom: 2px;
    padding-right: 4px;
    background: #0058e6;
    color: #fff;
    font-size: 13px;
  }

  .nav-title span {
    flex: 1;
  }

  .nav-title path {
    fill: none;
    stroke: #fff;
  }

  .section {
    height: 22px;
    margin-right: 1px;
    border: 1px solid #a0a0a0;
    border-top-color: #fff;
    box-sizing: border-box;
  }

  .nav-tools {
    display: flex;
    gap: 5px;
    height: 26px;
    margin: 1px 1px 0 1px;
    padding: 4px 5px 0;
    border-top: 1px solid #a0a0a0;
    background: linear-gradient(#fff, #ececec);
    box-sizing: border-box;
  }

  .nav-tools path {
    fill: #009688;
    stroke: #000;
  }

  .tree {
    flex: 1;
    margin: 0 2px 0 1px;
    padding: 1px 6px 0;
    border: 1px solid #828790;
    background: #fff;
  }

  .node {
    display: flex;
    align-items: center;
    height: 16px;
  }

  .node .twist {
    margin-right: -2px;
  }

  .node path {
    fill: none;
  }

  .twist path {
    stroke: #a0a0a0;
    stroke-width: 2;
  }

  .twist.open path {
    stroke: #404040;
  }

  .node path.dots,
  .twist.open path.dots {
    stroke: #808080;
    stroke-width: 1;
    stroke-dasharray: 1 1;
  }

  .label {
    margin-left: 2px;
    padding: 0 2px;
  }

  .child .label {
    margin-left: 1px;
  }

  .current {
    background: #d9d9d9;
  }

  .main {
    display: flex;
    flex: 1;
    flex-direction: column;
    min-width: 0;
  }

  .edit {
    gap: 6px;
    height: 28px;
    padding-left: 4px;
  }

  .edit label {
    margin-left: -2px;
  }

  .floor {
    display: flex;
    align-items: center;
    width: 60px;
    height: 24px;
    margin-right: -4px;
    padding-right: 2px;
    background: #fff;
  }

  .floor select {
    flex: 1;
    padding-left: 2px;
    appearance: none;
  }

  .panes {
    display: flex;
    flex: 1;
    gap: 3px;
  }

  .components {
    display: flex;
    flex-direction: column;
    width: 184px;
  }

  .search {
    display: flex;
    align-items: center;
    gap: 4px;
    height: 26px;
    margin-top: 4px;
    padding-left: 1px;
  }

  .search input {
    width: 157px;
    height: 24px;
    padding: 0 2px;
    border: 1px solid #7a7a7a;
    background: #fff;
    box-sizing: border-box;
  }

  .search input::placeholder,
  .cortana input::placeholder {
    color: #808080;
    opacity: 1;
  }

  .list {
    margin: 0 1px 1px 0;
    padding: 1px 5px 0;
  }

  .picked {
    display: flex;
    align-items: center;
    height: 16px;
    gap: 6px;
    padding: 0 5px 0 2px;
    background: #316ac5;
  }

  .picked .icon {
    width: 14px;
    height: 12px;
  }

  /* 属性编辑 */
  .properties {
    display: flex;
    flex: 1;
    flex-direction: column;
    margin: 0 2px 1px 0;
    border: 1px solid #d9d9d9;
    border-top: 0;
    background: #fff;
    min-width: 0;
  }

  .tabs {
    height: 20px;
    border-bottom: 1px solid #d9d9d9;
  }

  .tab {
    height: 21px;
    padding: 0 7px;
    border-top: 1px solid #d9d9d9;
    border-right: 1px solid #d9d9d9;
    background: #fff;
  }

  .sheet {
    position: relative;
    flex: 1;
    margin: 3px 2px 3px 3px;
    padding: 1px;
    border: 1px solid #a0a0a8;
  }

  table {
    width: 369px;
    table-layout: fixed;
    border-spacing: 0;
  }

  .c-index {
    width: 21px;
  }

  .c-name {
    width: 191px;
  }

  .c-value {
    width: 126px;
  }

  .c-extra {
    width: 31px;
  }

  th,
  td {
    height: 18px;
    padding: 0;
    border-right: 1px solid #c0c0c0;
    border-bottom: 1px solid #c0c0c0;
    font-weight: 400;
    line-height: 16px;
    text-align: left;
  }

  th {
    background: linear-gradient(#fff, #ececec);
    text-align: center;
  }

  thead th {
    height: 22px;
  }

  thead .hot {
    background: linear-gradient(#f9dba6, #f1be62);
    color: #600060;
  }

  .cell {
    display: flex;
    align-items: center;
    height: 18px;
  }

  .indent {
    width: 20px;
  }

  .branch {
    margin-left: 3px;
  }

  .branch path {
    fill: none;
    stroke: #c0c0c0;
  }

  .toggle {
    margin: 0 5px 0 2px;
    border: 1px solid #c0c0c0;
  }

  .toggle path {
    stroke: #000;
  }

  .blue {
    color: #0000ff;
  }

  .gray {
    color: #808080;
  }

  .value {
    padding-left: 2px;
  }

  .selected th {
    background: #ffd58d;
    color: #600060;
  }

  .selected .name {
    background: #0078d7;
    color: #fff;
  }

  .selected .value {
    background: #d9eaf9;
  }

  .extra input {
    display: block;
    width: 13px;
    height: 13px;
    margin: 0 auto;
    border: 1px solid #333;
    background: #fff;
    appearance: none;
  }

  .marker {
    position: absolute;
    left: 136px;
    top: 226px;
  }

  .marker ellipse {
    fill: none;
    stroke: #ff0000;
    stroke-width: 7;
  }

  .speed {
    position: absolute;
    left: 556px;
    top: 56px;
    display: flex;
    align-items: center;
    width: 126px;
    height: 38px;
    border: 1px solid #b4b4b4;
    border-radius: 20px;
    background: linear-gradient(#f4f4f4, #dcdcdc);
    box-shadow: 0 4px 8px rgba(0, 0, 0, 0.3);
    font-size: 10px;
  }

  .ball {
    display: flex;
    align-items: center;
    justify-content: center;
    width: 44px;
    height: 44px;
    border: 2px solid #f4f4f4;
    border-radius: 50%;
    background: radial-gradient(circle at 50% 10%, #8fc9ae, transparent 30%), linear-gradient(#0c7a50 38%, #4fcf68 38%, #3fc35a);
    box-shadow: 0 1px 3px rgba(0, 0, 0, 0.6);
    color: #fff;
    font-size: 14px;
  }

  .rates {
    display: flex;
    flex: 1;
    flex-direction: column;
    padding: 0 4px;
    line-height: 15px;
  }

  .rates span {
    display: flex;
    align-items: center;
    justify-content: space-between;
  }

  .rates path {
    fill: none;
    stroke-width: 2;
  }

  .boost {
    margin-right: 4px;
  }

  /* 状态栏 */
  .status {
    position: relative;
    display: flex;
    gap: 2px;
    height: 20px;
    padding-top: 2px;
    background: #f7f7f7;
  }

  .status > span {
    padding: 1px 1px 0;
    border: 1px solid #cfcfcf;
    overflow: hidden;
    box-sizing: border-box;
  }

  .s-blank {
    width: 148px;
  }

  .s-height {
    width: 78px;
  }

  .s-bottom {
    width: 98px;
  }

  .s-zero {
    width: 48px;
  }

  .s-hint {
    display: flex;
    flex: 1;
  }

  .tail {
    width: 29px;
    margin-left: auto;
    overflow: hidden;
  }

  .s-fps {
    width: 71px;
  }

  .ime {
    position: absolute;
    right: 105px;
    bottom: 0;
    display: flex;
    align-items: center;
    gap: 6px;
    height: 22px;
    padding-right: 3px;
    border: 1px solid #9fc3e6;
    border-left: 0;
    background: #fff;
    color: #2577c8;
    font-size: 15px;
  }

  .ime-logo {
    width: 27px;
    height: 27px;
  }

  /* 任务栏 */
  .taskbar {
    display: flex;
    align-items: center;
    height: 40px;
    background: #000b0e;
    color: #fff;
  }

  .start {
    display: flex;
    align-items: center;
    justify-content: center;
    width: 48px;
    height: 40px;
    background: #000;
  }

  .cortana {
    display: flex;
    align-items: center;
    gap: 5px;
    width: 344px;
    height: 40px;
    padding: 0 14px 0 9px;
    background: #333;
    box-sizing: border-box;
  }

  .cortana input {
    flex: 1;
    font-size: 14px;
  }

  .cortana input::placeholder {
    color: #949494;
  }

  .task {
    display: flex;
    align-items: center;
    justify-content: center;
    width: 41px;
    height: 40px;
    margin: 0 4px;
    box-sizing: border-box;
  }

  .pinned {
    width: 42px;
  }

  .task svg {
    width: 32px;
    height: 32px;
  }

  .run {
    border-bottom: 2px solid #76b4f4;
    border-top: 2px solid transparent;
  }

  .active {
    width: 49px;
    margin: 0;
    background: #333d41;
  }

  .grip {
    width: 1px;
    height: 15px;
    margin: 0 11px 0 9px;
    border: 1px solid #3a4245;
    border-top: 0;
    border-bottom: 0;
  }

  .tray {
    display: flex;
    align-items: center;
    gap: 10px;
    margin-left: auto;
  }

  .tray .grip {
    margin: 0;
  }

  .tray path {
    fill: none;
    stroke: #fff;
  }

  .clock {
    display: flex;
    flex-direction: column;
    align-items: center;
    margin: 0 8px;
    line-height: 19px;
  }

  .edge {
    width: 3px;
    height: 40px;
    margin-left: 10px;
    border-left: 1px solid #5a5a5a;
  }
</style>
